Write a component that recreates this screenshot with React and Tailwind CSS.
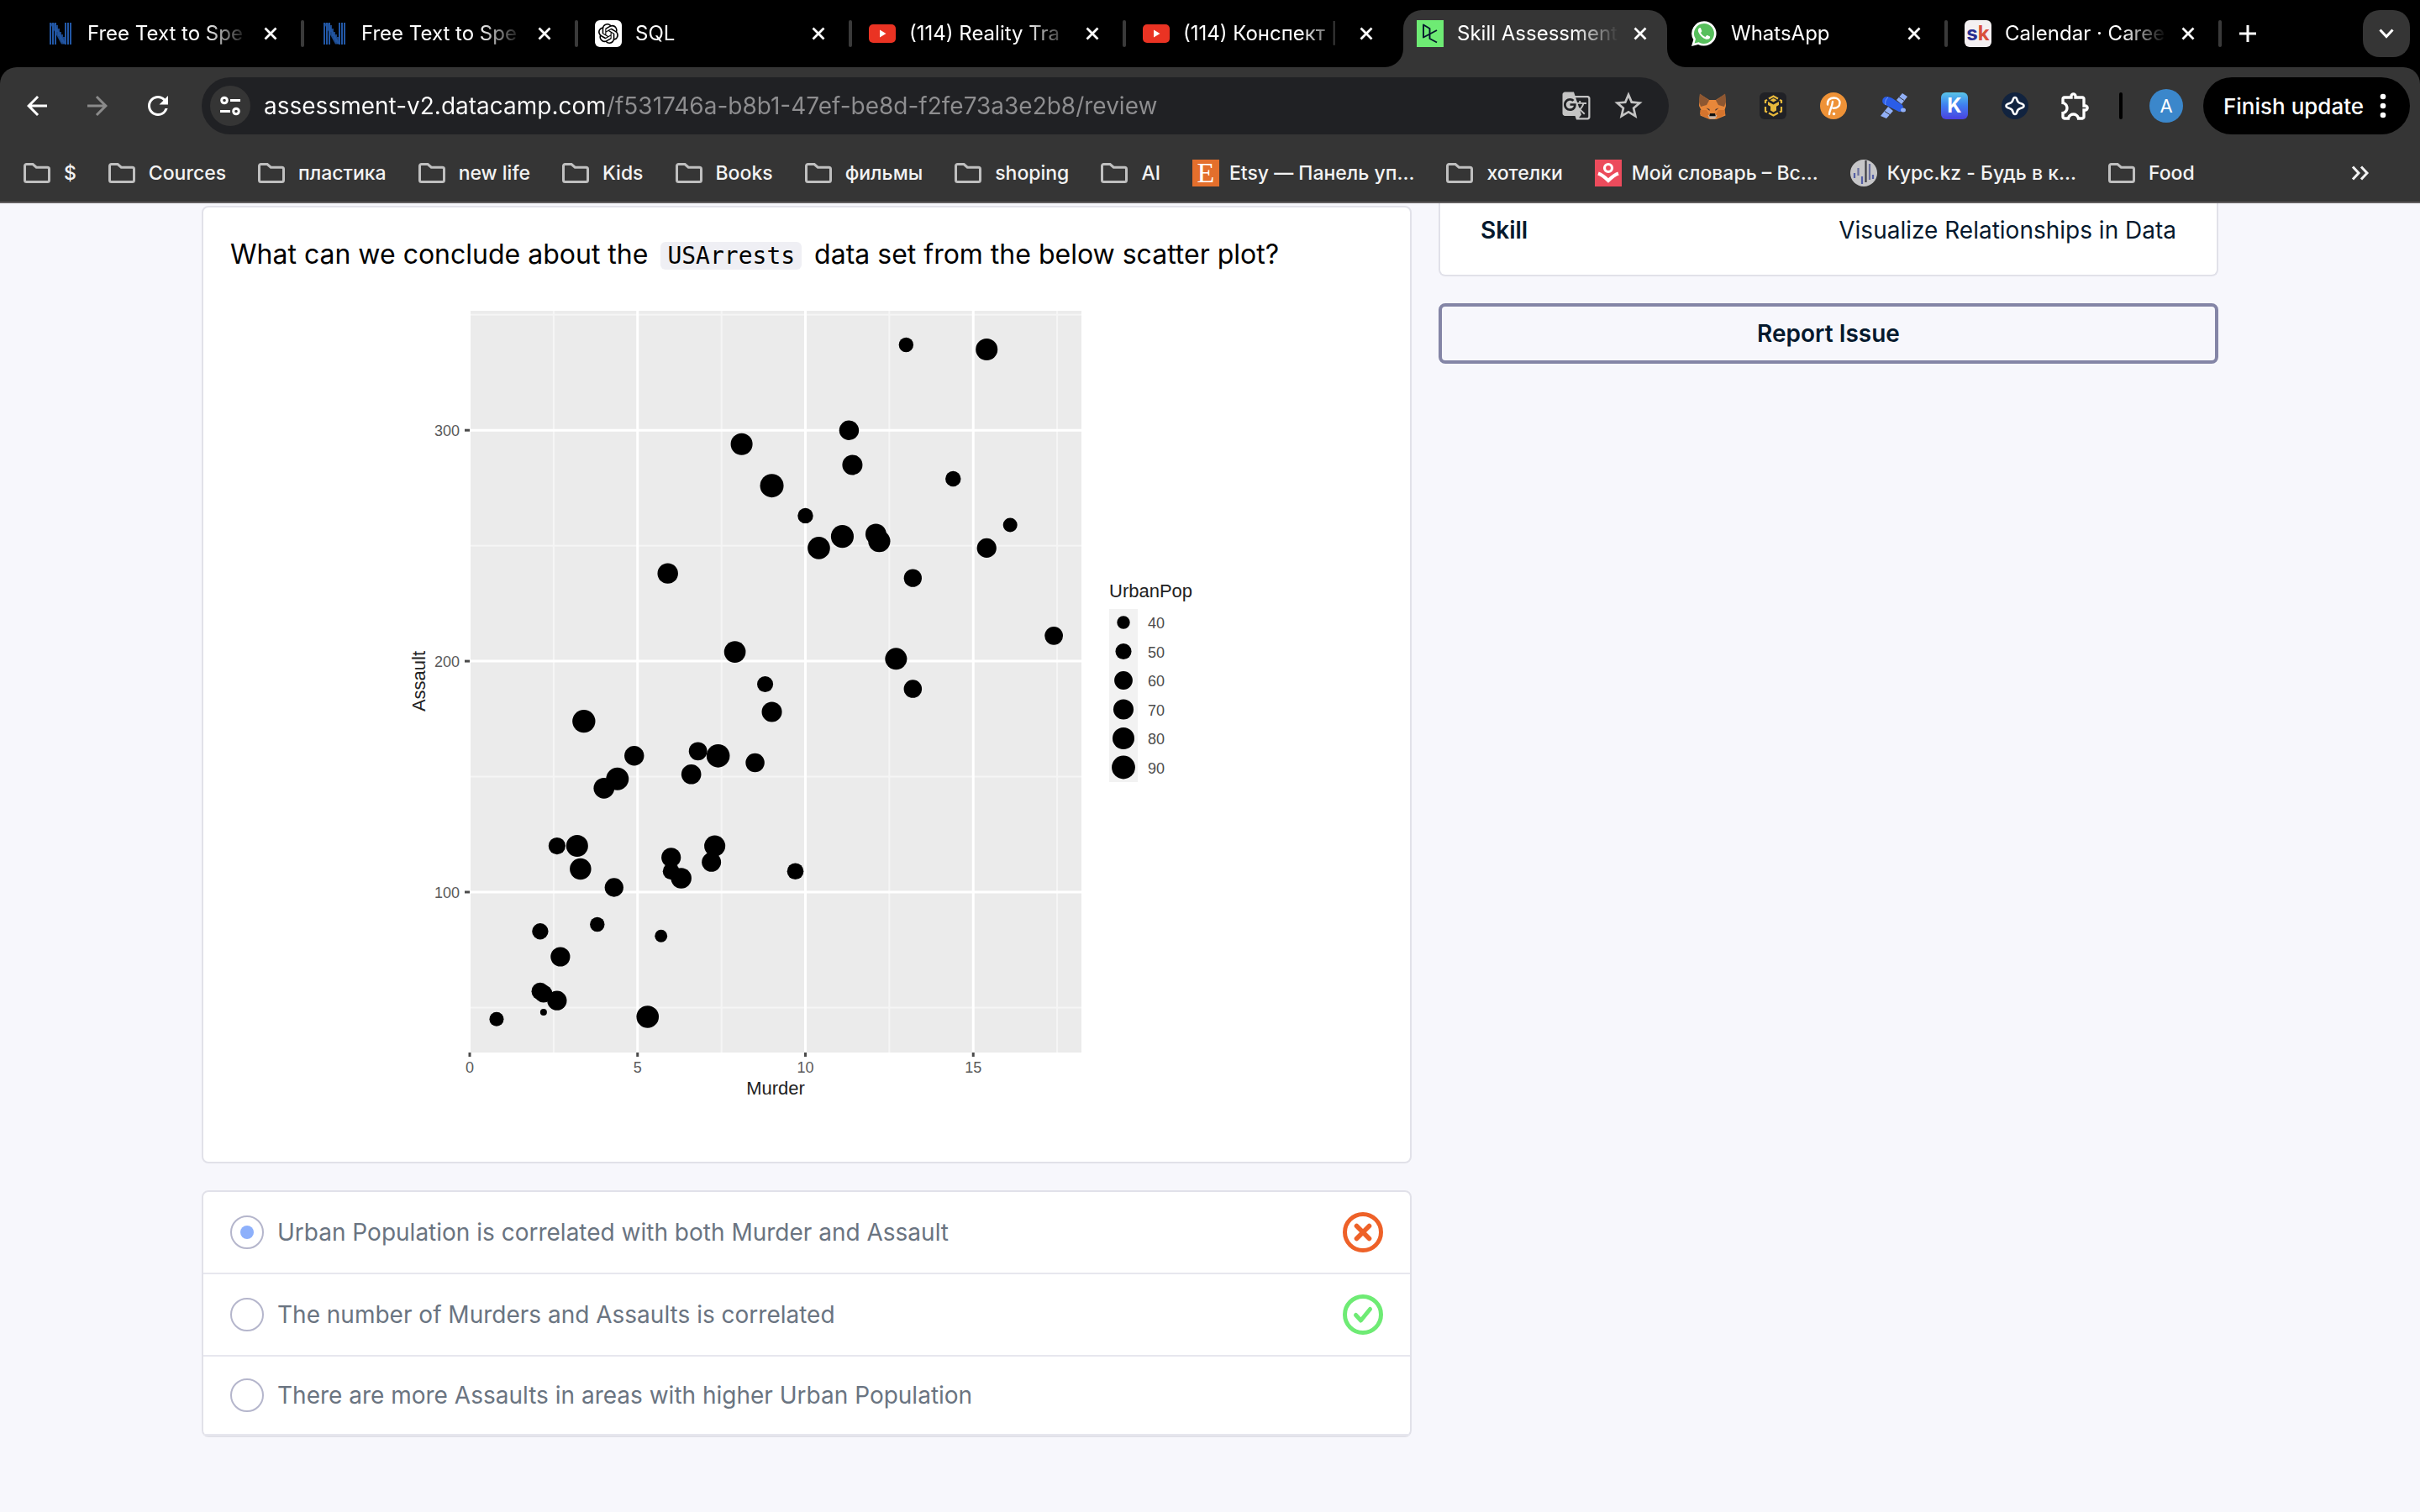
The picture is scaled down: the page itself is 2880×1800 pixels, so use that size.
import React, { useState } from "react";
import { SiOpenai } from "react-icons/si";
import {
  MdArrowBack,
  MdArrowForward,
  MdRefresh,
  MdGTranslate,
  MdStarBorder,
  MdOutlineExtension,
} from "react-icons/md";

/* ---------- favicons and small drawings ---------- */

function StripedN() {
  return (
    <svg viewBox="0 0 32 32" className="size-8">
      <g stroke="#2257a5" strokeWidth="2">
        <path d="M4 3v26M7 3v26M10 3v26M22 3v26M25 3v26M28 3v26" />
        <path d="M12 6v8M14 10v9M16 14v9M18 17v9M20 20v8" strokeWidth="1.6" />
      </g>
      <path d="M3.5 3.500H9L22.500 28.500H17Z" fill="#2257a5" fillOpacity=".85" />
    </svg>
  );
}

function OpenAiTile() {
  return (
    <span className="flex size-8 items-center justify-center rounded-md bg-white text-black">
      <SiOpenai size={24} />
    </span>
  );
}

function YouTube() {
  return (
    <svg viewBox="0 0 32 32" className="size-8">
      <rect x="0" y="5" width="32" height="22" rx="5" fill="#ea3323" />
      <path d="M13 11.500 20.500 16 13 20.500Z" fill="#fff" />
    </svg>
  );
}

function DataCamp() {
  return (
    <svg viewBox="0 0 32 32" className="size-8">
      <rect width="32" height="32" fill="#6eeb74" />
      <path
        d="M24 12 8 20.500V5.500L15.500 10V22L24 26.500"
        fill="none"
        stroke="#05192d"
        strokeWidth="1.900"
        strokeLinejoin="round"
      />
    </svg>
  );
}

function WhatsApp() {
  return (
    <svg viewBox="0 0 32 32" className="size-8">
      <path
        d="M16 1.200A14.700 14.700 0 0 0 3.300 23.300L1 31l8-2.100A14.700 14.700 0 1 0 16 1.200Z"
        fill="#fff"
      />
      <path
        d="M16 4A12 12 0 0 0 6 22.600L4.600 27.500l5-1.300A12 12 0 1 0 16 4Z"
        fill="#57bf5c"
      />
      <path
        d="M11.500 9c-.5 0-1.300.3-1.900 1.100-.8 1-1 2.500-.3 4.200 1.600 4 5 7.200 9.200 8.400 1.800.5 3.800-.3 4.400-1.700.3-.7.300-1.300.1-1.500l-3-1.500c-.4-.2-.7-.1-1 .3l-1.200 1.400c-.2.3-.5.3-.9.1a10 10 0 0 1-4.700-4.200c-.2-.3-.2-.6.100-.9l.9-1.200c.2-.3.200-.6.100-.8l-1.200-3c-.1-.4-.3-.7-.6-.7Z"
        fill="#fff"
      />
    </svg>
  );
}

function SkTile() {
  return (
    <span className="flex size-8 items-center justify-center rounded-md bg-[#f4f0f2] font-['Inter'] text-2xl leading-6 font-bold">
      <span className="text-[#2a2f8f]">s</span>
      <span className="text-[#d9503c]">k</span>
    </span>
  );
}

function Folder() {
  return (
    <svg viewBox="0 0 32 24" className="h-6 w-8 shrink-0">
      <path
        d="M3.500 1.500h7.600l4.200 3.700h13.200a2 2 0 0 1 2 2v13.300a2 2 0 0 1-2 2h-25a2 2 0 0 1-2-2v-17a2 2 0 0 1 2-2Z"
        fill="none"
        stroke="#bfbfbf"
        strokeWidth="3"
      />
    </svg>
  );
}

function EtsyTile() {
  return (
    <span className="flex size-8 shrink-0 items-center justify-center bg-[#e46f2c] font-['Liberation_Serif',serif] text-[34px] leading-8 text-white">
      E
    </span>
  );
}

function Dictionary() {
  return (
    <svg viewBox="0 0 32 32" className="size-8 shrink-0">
      <rect width="32" height="32" fill="#ec4b5c" />
      <circle cx="16" cy="10" r="4.500" fill="none" stroke="#fff" strokeWidth="3.200" />
      <path d="M4 16.500c3 1 9 5.500 12 8.500 3-3 9-7.500 12-8.500" fill="none" stroke="#fff" strokeWidth="4" />
    </svg>
  );
}

function Rates() {
  return (
    <svg viewBox="0 0 32 32" className="size-8 shrink-0">
      <circle cx="16" cy="16" r="16" fill="#c6c6c8" />
      <g strokeWidth="2.200">
        <path d="M5 16v6M14 20v9M27 18v5" stroke="#5560a6" />
        <path d="M9.500 10v9M23 5v19" stroke="#6a70a0" />
        <path d="M18.500 1v26" stroke="#3d3d42" />
      </g>
    </svg>
  );
}

function Fox() {
  return (
    <svg viewBox="0 0 32 32" className="size-8">
      <path d="M1 2 12 9h8L31 2l1 14-1.500 5 1 6.500-6 2.500-5 2h-8l-5-2-6-2.500 1-6.500L0 16Z" fill="#e8873a" />
      <path d="M1 1.500 12 9.500 9 15 2 17 0 11Z" fill="#8e5731" />
      <path d="M31 1.500 20 9.500l3 5.500 7 2 2-6Z" fill="#8e5731" />
      <path d="M1.500 21 9 21l3 5-1 4-5-1-5-3Z" fill="#d5742d" />
      <path d="M30.500 21 23 21l-3 5 1 4 5-1 5-3Z" fill="#d5742d" />
      <path d="M8.500 18.500 12.500 20v2ZM23.500 18.500 19.500 20v2Z" fill="#3a2f35" />
      <path d="M10.500 27.500 13 26h6l2.500 1.500-2.500 4h-6Z" fill="#c9b4a6" />
      <path d="M13 25h6l.8 3.200h-7.600Z" fill="#111" />
    </svg>
  );
}

function CubeTile() {
  return (
    <svg viewBox="0 0 32 32" className="size-8">
      <rect width="32" height="32" rx="6" fill="#202126" />
      <g fill="none" stroke="#e8b93c" strokeWidth="2.200">
        <path d="m11 7.500 5.500-3 5.500 3M7 13v-3l2-1.100M26 13v-3l-2-1.100M7 17v5.500l2 1M26 17v5.500l-2 1M11 24.500l5.500 3 5.500-3" />
      </g>
      <path d="m16.500 7 4 2.200-4 2.300-4-2.300ZM10 11l6.500 3.500L23 11v4l-3 1.800v4.700l-3.500 2-3.500-2v-4.700L10 15Z" fill="#e8b93c" />
    </svg>
  );
}

function OrangeP() {
  return (
    <svg viewBox="0 0 32 32" className="size-8">
      <circle cx="16" cy="16" r="16" fill="#ee9237" />
      <path
        d="M11 26c0-4 3.500-9 4-15M9 14.500C8.500 9 12 6.500 16.500 6.500c4 0 7 2.300 7 6s-3 6.500-8 6.200"
        fill="none"
        stroke="#fff"
        strokeWidth="2.400"
        strokeLinecap="round"
      />
      <circle cx="16.500" cy="25.500" r="1.700" fill="#fff" />
    </svg>
  );
}

function Satellite() {
  return (
    <svg viewBox="0 0 32 32" className="size-8">
      <path d="m19 9 7-8 6 4-7 9ZM9 17l-9 11 7 3 8-9Z" fill="#92b0f6" />
      <path d="m22 5.500 6 4M5 22.500l6 4" stroke="#353535" strokeWidth="1" />
      <path d="M5 5.500c3-1.500 6 0 9 1.500l12 8c2 2 0 9-4 8L4 14C1 12 2 7 5 5.500Z" fill="#2a5de8" />
      <path d="M9 6c-3 2-4 6-3 9" stroke="#7da0f5" fill="none" />
      <ellipse cx="27" cy="21" rx="3" ry="2.500" fill="#92b0f6" />
    </svg>
  );
}

function KTile() {
  return (
    <span className="flex size-8 items-center justify-center rounded-md bg-linear-to-b from-[#5ac4e8] via-[#3f7bf0] to-[#4a40e0] font-['Inter'] text-2xl leading-8 font-bold text-white">
      K
    </span>
  );
}

function Diamond() {
  return (
    <svg viewBox="0 0 32 32" className="size-8">
      <circle cx="16" cy="16" r="16" fill="#11233f" />
      <path
        d="M16 6c1.500 0 2 1 2.500 3 .6 2.300 1.800 3.500 4 4 2.500.6 4 1.300 4 3s-1.500 2.400-4 3c-2.200.5-3.400 1.700-4 4-.5 2-1 3-2.500 3s-2-1-2.500-3c-.6-2.300-1.800-3.500-4-4-2.500-.6-4-1.300-4-3s1.500-2.400 4-3c2.200-.5 3.400-1.700 4-4 .5-2 1-3 2.500-3Z"
        fill="none"
        stroke="#fff"
        strokeWidth="2.600"
      />
    </svg>
  );
}

function Cross() {
  return (
    <svg viewBox="0 0 16 16" className="size-4">
      <path d="m1.500 1.500 13 13m0-13-13 13" stroke="currentColor" strokeWidth="2.800" />
    </svg>
  );
}

/* ---------- browser window ---------- */

const TABS = [
  { title: "Free Text to Spe", icon: <StripedN /> },
  { title: "Free Text to Spe", icon: <StripedN /> },
  { title: "SQL", icon: <OpenAiTile /> },
  { title: "(114) Reality Tra", icon: <YouTube /> },
  { title: "(114) Конспект |", icon: <YouTube /> },
  { title: "Skill Assessment", icon: <DataCamp />, active: true },
  { title: "WhatsApp", icon: <WhatsApp /> },
  { title: "Calendar · Caree", icon: <SkTile /> },
];

function Flare({ side }) {
  return (
    <svg
      viewBox="0 0 22 22"
      className={
        side === "left"
          ? "absolute right-full bottom-0 size-[22px]"
          : "absolute bottom-0 left-full size-[22px]"
      }
    >
      <path
        d={side === "left" ? "M22 0v22H0A22 22 0 0 0 22 0Z" : "M0 0v22h22A22 22 0 0 1 0 0Z"}
        fill="#353535"
      />
    </svg>
  );
}

function Tab({ title, icon, active, hideRule }) {
  return (
    <div className="flex h-full w-[326px] items-end">
      <div
        className={
          active
            ? "relative ml-1 flex h-[68px] w-[314px] items-center rounded-t-[22px] bg-[#353535] pr-5 pb-3 pl-4"
            : "flex h-[68px] flex-1 items-center pb-3 pl-5"
        }
      >
        {active && <Flare side="left" />}
        {active && <Flare side="right" />}
        <button type="button" className="flex flex-1 items-center gap-4 overflow-hidden text-left">
          <span className="shrink-0">{icon}</span>
          <span className="flex-1 overflow-hidden mask-r-from-30% mask-r-to-90% [mask-image:linear-gradient(to_right,black_140px,transparent_192px)] text-2xl leading-8 whitespace-nowrap text-white">
            {title}
          </span>
        </button>
        <button
          type="button"
          aria-label="Close tab"
          className={active ? "p-1 text-white" : "mr-6 p-1 text-white"}
        >
          <Cross />
        </button>
        {!active && (
          <span className={hideRule ? "h-8 w-1" : "h-8 w-1 rounded-full bg-[#3a3a3a]"} />
        )}
      </div>
    </div>
  );
}

function TabStrip() {
  return (
    <div className="flex h-20 items-center bg-black pr-3 pl-9">
      {TABS.map((tab, i) => (
        <Tab key={i} {...tab} hideRule={Boolean(TABS[i + 1]?.active)} />
      ))}
      <button type="button" aria-label="New tab" className="ml-5 text-white">
        <svg viewBox="0 0 22 22" className="size-[22px]">
          <path d="M11 1v20M1 11h20" stroke="currentColor" strokeWidth="3" />
        </svg>
      </button>
      <button
        type="button"
        aria-label="Search tabs"
        className="ml-auto flex size-14 items-center justify-center rounded-[20px] bg-[#353535] text-white"
      >
        <svg viewBox="0 0 18 12" className="h-3 w-[18px]">
          <path d="m1.500 1.500 7.500 8 7.500-8" fill="none" stroke="currentColor" strokeWidth="3" />
        </svg>
      </button>
    </div>
  );
}

const EXTENSIONS = [
  ["Wallet", <Fox />],
  ["Chain wallet", <CubeTile />],
  ["Parser", <OrangeP />],
  ["Satellite", <Satellite />],
  ["Keys", <KTile />],
  ["Star wallet", <Diamond />],
];

function Toolbar() {
  return (
    <div className="flex items-center px-3 pt-3">
      <div className="flex w-[228px] items-center gap-9 pl-3.5 text-white">
        <button type="button" aria-label="Back">
          <MdArrowBack size={36} />
        </button>
        <button type="button" aria-label="Forward" className="text-[#8a8a8a]">
          <MdArrowForward size={36} />
        </button>
        <button type="button" aria-label="Reload">
          <MdRefresh size={36} />
        </button>
      </div>
      <div className="flex h-[68px] flex-1 items-center rounded-full bg-[#202124] pr-7 pl-2.5">
        <button
          type="button"
          aria-label="Site information"
          className="flex size-12 items-center justify-center rounded-full bg-[#353535] text-white"
        >
          <svg viewBox="0 0 24 24" className="size-6">
            <g fill="none" stroke="currentColor" strokeWidth="3">
              <circle cx="5" cy="5.500" r="3.300" />
              <path d="M12 5.500h12M0 18.500h12" />
              <circle cx="19" cy="18.500" r="3.300" />
            </g>
          </svg>
        </button>
        <input
          type="text"
          aria-label="Address"
          defaultValue="assessment-v2.datacamp.com/f531746a-b8b1-47ef-be8d-f2fe73a3e2b8/review"
          className="ml-4 h-10 flex-1 bg-linear-to-r from-white from-[405px] to-[#8e8e90] to-[405px] bg-clip-text text-[28px] text-transparent caret-white outline-none"
        />
        <div className="flex items-center gap-6 text-[#c4c4c4]">
          <button type="button" aria-label="Translate">
            <MdGTranslate size={36} />
          </button>
          <button type="button" aria-label="Bookmark this page">
            <MdStarBorder size={40} />
          </button>
        </div>
      </div>
      <div className="ml-9 flex items-center gap-10">
        {EXTENSIONS.map(([name, icon]) => (
          <button key={name} type="button" aria-label={name}>
            {icon}
          </button>
        ))}
        <button type="button" aria-label="Extensions" className="-mx-1 text-white">
          <MdOutlineExtension size={40} />
        </button>
      </div>
      <span className="ml-9 h-8 w-1 rounded-full bg-black" />
      <button
        type="button"
        aria-label="Profile"
        className="ml-8 size-10 rounded-full bg-[#3b87cb] text-[22px] text-white"
      >
        A
      </button>
      <button
        type="button"
        className="ml-6 flex h-[68px] w-[246px] items-center justify-between rounded-full bg-black pr-7 pl-6 text-[26px] font-medium text-white"
      >
        Finish update
        <svg viewBox="0 0 8 30" className="h-[30px] w-2">
          <g fill="currentColor">
            <circle cx="4" cy="4" r="3.300" />
            <circle cx="4" cy="15" r="3.300" />
            <circle cx="4" cy="26" r="3.300" />
          </g>
        </svg>
      </button>
    </div>
  );
}

const BOOKMARKS = [
  { title: "$" },
  { title: "Cources" },
  { title: "пластика" },
  { title: "new life" },
  { title: "Kids" },
  { title: "Books" },
  { title: "фильмы" },
  { title: "shoping" },
  { title: "AI" },
  { title: "Etsy — Панель уп...", icon: <EtsyTile /> },
  { title: "хотелки" },
  { title: "Мой словарь – Вс...", icon: <Dictionary /> },
  { title: "Курс.kz - Будь в к...", icon: <Rates /> },
  { title: "Food" },
];

function Bookmarks() {
  return (
    <nav className="flex h-20 items-center gap-[38px] pt-3 pr-[60px] pl-7 text-[23px] font-medium text-[#f3f3f3]">
      {BOOKMARKS.map(({ title, icon }) => (
        <a
          key={title}
          href="#"
          className={icon ? "flex items-center gap-3 whitespace-nowrap" : "flex items-center gap-4 whitespace-nowrap"}
        >
          {icon ?? <Folder />}
          {title}
        </a>
      ))}
      <button type="button" aria-label="More bookmarks" className="ml-auto">
        <svg viewBox="0 0 22 18" className="h-[18px] w-[22px]">
          <path d="m2 1.500 7 7.500-7 7.500M12 1.500 19 9l-7 7.500" fill="none" stroke="currentColor" strokeWidth="3" />
        </svg>
      </button>
    </nav>
  );
}

/* ---------- scatter plot ---------- */

// [murder, assault, urban population]
const STATES = [
  [13.2, 236, 58], [10, 263, 48], [8.1, 294, 80], [8.8, 190, 50], [9, 276, 91],
  [7.9, 204, 78], [3.3, 110, 77], [5.9, 238, 72], [15.4, 335, 80], [17.4, 211, 60],
  [5.3, 46, 83], [2.6, 120, 54], [10.4, 249, 83], [7.2, 113, 65], [2.2, 56, 57],
  [6, 115, 66], [9.7, 109, 52], [15.4, 249, 66], [2.1, 83, 51], [11.3, 300, 67],
  [4.4, 149, 85], [12.1, 255, 74], [2.7, 72, 66], [16.1, 259, 44], [9, 178, 70],
  [6, 109, 53], [4.3, 102, 62], [12.2, 252, 81], [2.1, 57, 56], [7.4, 159, 89],
  [11.4, 285, 70], [11.1, 254, 86], [13, 337, 45], [0.8, 45, 44], [7.3, 120, 75],
  [6.6, 151, 68], [4.9, 159, 67], [6.3, 106, 72], [3.4, 174, 87], [14.4, 279, 48],
  [3.8, 86, 45], [13.2, 188, 59], [12.7, 201, 80], [3.2, 120, 80], [2.2, 48, 32],
  [8.5, 156, 63], [4, 145, 73], [5.7, 81, 39], [2.6, 53, 66], [6.8, 161, 60],
];

const px = (murder) => 79 + murder * 39.95;
const py = (assault) => 702 - (assault - 100) * 2.749;
const radius = (pop) => 2 + 2 * (1 + 5 * Math.sqrt((pop - 32) / 59));

function ScatterPlot() {
  return (
    <svg
      viewBox="0 0 960 960"
      role="img"
      aria-label="Scatter plot of Assault against Murder, sized by UrbanPop"
      className="w-[960px] max-w-full font-['Liberation_Sans',Arial,sans-serif]"
    >
      <rect x="80" y="10" width="727" height="883" fill="#ebebeb" />
      <g stroke="#f5f5f5" strokeWidth="2">
        {[2.5, 7.5, 12.5, 17.5].map((v) => (
          <path key={v} d={`M${px(v)} 10V893`} />
        ))}
        {[50, 150, 250, 350].map((v) => (
          <path key={v} d={`M80 ${py(v)}H807`} />
        ))}
      </g>
      <g stroke="#fff" strokeWidth="3">
        {[5, 10, 15].map((v) => (
          <path key={v} d={`M${px(v)} 10V893`} />
        ))}
        {[100, 200, 300].map((v) => (
          <path key={v} d={`M80 ${py(v)}H807`} />
        ))}
      </g>
      {STATES.map(([m, a, u], i) => (
        <circle key={i} cx={px(m)} cy={py(a)} r={radius(u)} />
      ))}

      <g stroke="#4a4a4a" strokeWidth="3">
        {[0, 5, 10, 15].map((v) => (
          <path key={v} d={`M${px(v)} 893V898`} />
        ))}
        {[100, 200, 300].map((v) => (
          <path key={v} d={`M73 ${py(v)}H79`} />
        ))}
      </g>
      <g fill="#5a5a5a" fontSize="18">
        {[0, 5, 10, 15].map((v) => (
          <text key={v} x={px(v)} y="917" textAnchor="middle">
            {v}
          </text>
        ))}
        {[100, 200, 300].map((v) => (
          <text key={v} x="67" y={py(v) + 7} textAnchor="end">
            {v}
          </text>
        ))}
      </g>
      <g fill="#222" fontSize="22">
        <text x="443" y="943" textAnchor="middle">
          Murder
        </text>
        <text transform="translate(26 451) rotate(-90)" textAnchor="middle">
          Assault
        </text>
        <text x="840" y="351">
          UrbanPop
        </text>
      </g>

      <rect x="840" y="365" width="34" height="206" fill="#f2f2f2" />
      {[40, 50, 60, 70, 80, 90].map((v, i) => (
        <g key={v}>
          <circle cx="857" cy={381 + i * 34.5} r={radius(v)} />
          <text x="886" y={388 + i * 34.5} fontSize="18" fill="#4d4d4d">
            {v}
          </text>
        </g>
      ))}
    </svg>
  );
}

/* ---------- assessment page ---------- */

function WrongMark() {
  return (
    <svg viewBox="0 0 48 48" className="size-12" role="img" aria-label="Incorrect">
      <g fill="none" stroke="#ee6128" strokeWidth="5" strokeLinecap="round">
        <circle cx="24" cy="24" r="21.500" />
        <path d="m16.500 16.500 15 15m0-15-15 15" strokeWidth="5.600" />
      </g>
    </svg>
  );
}

function RightMark() {
  return (
    <svg viewBox="0 0 48 48" className="size-12" role="img" aria-label="Correct">
      <g fill="none" stroke="#6eeb74" strokeWidth="5" strokeLinecap="round" strokeLinejoin="round">
        <circle cx="24" cy="24" r="21.500" />
        <path d="m15.500 24.500 6 6.500L32.500 17.500" />
      </g>
    </svg>
  );
}

const ANSWERS = [
  { text: "Urban Population is correlated with both Murder and Assault", mark: <WrongMark />, row: "h-[98px]" },
  { text: "The number of Murders and Assaults is correlated", mark: <RightMark />, row: "h-[98px]" },
  { text: "There are more Assaults in areas with higher Urban Population", row: "h-[94px]" },
];

function Answers() {
  const [picked, setPicked] = useState(0);
  return (
    <fieldset aria-label="Answers" className="rounded-lg border-2 border-[#e1e1e9] bg-white">
      {ANSWERS.map(({ text, mark, row }, i) => (
        <label
          key={text}
          className={`flex items-center border-b-2 border-[#e7e7ee] px-8 text-[28px] text-[#6a7481] ${row}`}
        >
          <input
            type="radio"
            name="answer"
            checked={picked === i}
            onChange={() => setPicked(i)}
            className="mr-4 flex size-10 appearance-none items-center justify-center rounded-full border-2 border-[#b5b6cc] bg-white before:size-4 before:rounded-full checked:before:bg-[#8db0fb]"
          />
          <span className="flex-1">{text}</span>
          {mark}
        </label>
      ))}
    </fieldset>
  );
}

export default function App() {
  return (
    <div className="flex min-h-screen flex-col overflow-hidden bg-[#f7f7fc] font-['Inter','Noto_Sans',sans-serif]">
      <header className="bg-black">
        <TabStrip />
        <div className="rounded-t-[20px] border-b-2 border-[#605d5e] bg-[#353535]">
          <Toolbar />
          <Bookmarks />
        </div>
      </header>

      <main className="grid grid-cols-[45fr_29fr] items-start gap-8 px-60">
        <div className="flex flex-col gap-8 pt-[3px]">
          <section className="rounded-lg border-2 border-[#e1e1e9] bg-white px-8 pt-8 pb-[63px]">
            <h1 className="text-[32px] leading-[48px] text-black">
              What can we conclude about the{" "}
              <code className="mx-1.5 rounded-md bg-[#efeff4] px-2 font-['DejaVu_Sans_Mono',monospace] text-[28px]">
                USArrests
              </code>{" "}
              data set from the below scatter plot?
            </h1>
            <figure className="mt-[31px] flex justify-center">
              <ScatterPlot />
            </figure>
          </section>
          <Answers />
        </div>

        <aside className="flex flex-col gap-8 text-[28px] text-[#05192d]">
          <dl className="flex justify-between rounded-b-lg border-2 border-t-0 border-[#e1e1e9] bg-white px-12 pt-3 pb-8 leading-[41px]">
            <dt className="font-semibold">Skill</dt>
            <dd>Visualize Relationships in Data</dd>
          </dl>
          <button type="button" className="h-[72px] rounded-lg border-4 border-[#8485a6] font-semibold">
            Report Issue
          </button>
        </aside>
      </main>
    </div>
  );
}
